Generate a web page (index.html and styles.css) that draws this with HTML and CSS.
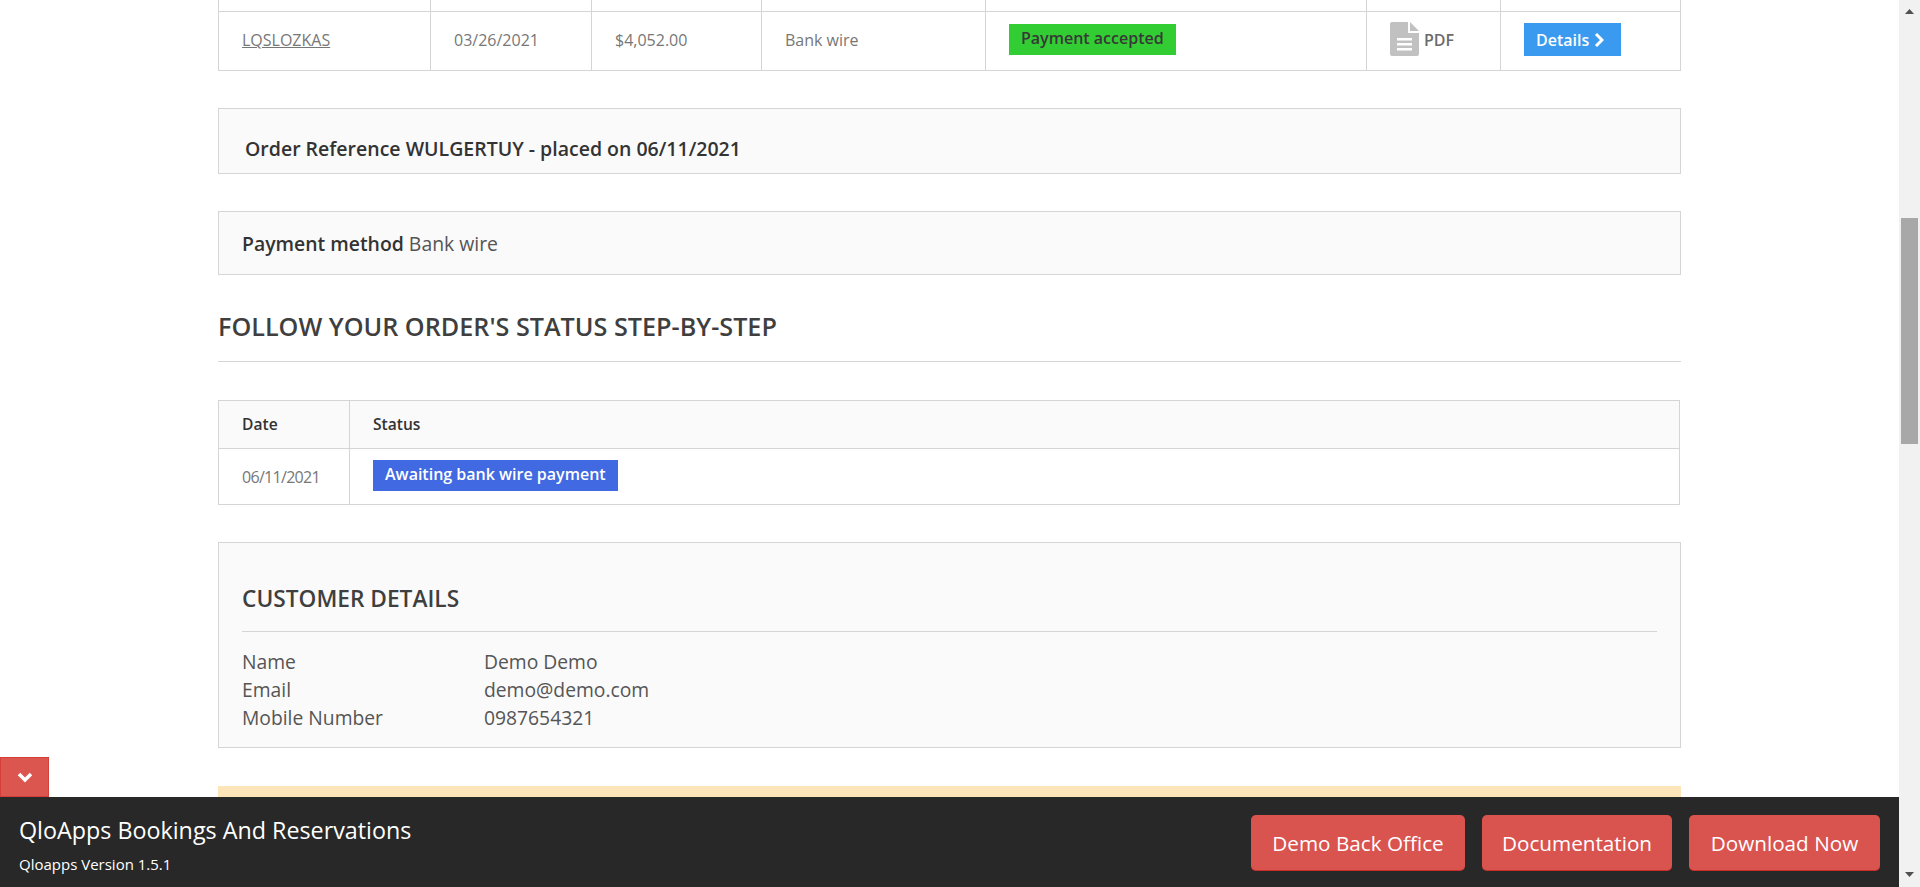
FILE: index.html
```html
<!DOCTYPE html>
<html>
<head lang="en">
    <meta charset="UTF-8">
    <title>Order history</title>
    <link rel="stylesheet" href="styles.css">
</head>
<body>
<div class="window">
    <div class="page">
        <div class="content">
            <table class="tbl tbl-orders">
                <colgroup>
                    <col class="c1"><col class="c2"><col class="c3"><col class="c4"><col class="c5"><col class="c6"><col class="c7">
                </colgroup>
                <tr class="row-cut"><td></td><td></td><td></td><td></td><td></td><td></td><td></td></tr>
                <tr class="row-order">
                    <td><a class="ref" href="#">LQSLOZKAS</a></td>
                    <td>03/26/2021</td>
                    <td>$4,052.00</td>
                    <td>Bank wire</td>
                    <td><span class="label label-green">Payment accepted</span></td>
                    <td>
                        <a class="pdf" href="#">
                            <svg width="29" height="34" viewBox="0 0 29 34">
                                <path d="M2 0H18V11H29V32a2 2 0 0 1-2 2H2a2 2 0 0 1-2-2V2a2 2 0 0 1 2-2z" fill="#c1c1c1"/>
                                <path d="M20 0L29 9H20z" fill="#c1c1c1"/>
                                <path d="M7 16h15v2.500H7zM7 21h15v2.500H7zM7 26h15v2.500H7z" fill="#fff"/>
                            </svg>
                            <span>PDF</span>
                        </a>
                    </td>
                    <td>
                        <a class="btn-details" href="#">Details
                            <svg width="10" height="14" viewBox="0 0 10 14"><path d="M2 1l6 6-6 6" fill="none" stroke="#fff" stroke-width="3"/></svg>
                        </a>
                    </td>
                </tr>
            </table>

            <div class="box box-ref">Order Reference WULGERTUY - placed on 06/11/2021</div>
            <div class="box box-pay"><b>Payment method</b> Bank wire</div>

            <h2 class="page-head">FOLLOW YOUR ORDER'S STATUS STEP-BY-STEP</h2>

            <table class="tbl tbl-status">
                <colgroup><col class="s1"><col></colgroup>
                <tr class="row-head"><th>Date</th><th>Status</th></tr>
                <tr class="row-status">
                    <td class="date">06/11/2021</td>
                    <td><span class="label label-blue">Awaiting bank wire payment</span></td>
                </tr>
            </table>

            <div class="box box-customer">
                <h3>CUSTOMER DETAILS</h3>
                <div class="info"><span>Name</span><span>Demo Demo</span></div>
                <div class="info"><span>Email</span><span>demo@demo.com</span></div>
                <div class="info"><span>Mobile Number</span><span>0987654321</span></div>
            </div>

            <div class="notice"></div>
        </div>

        <a class="toggle" href="#">
            <svg width="16" height="11" viewBox="0 0 16 11"><path d="M2 2l6 6 6-6" fill="none" stroke="#fff" stroke-width="3.500"/></svg>
        </a>
        <div class="bar">
            <div class="bar-text">
                <div class="bar-title">QloApps Bookings And Reservations</div>
                <div class="bar-version">Qloapps Version 1.5.1</div>
            </div>
            <div class="bar-btns">
                <a class="bar-btn b1" href="#">Demo Back Office</a>
                <a class="bar-btn b2" href="#">Documentation</a>
                <a class="bar-btn b3" href="#">Download Now</a>
            </div>
        </div>
    </div>
    <div class="scroll">
        <svg width="9" height="6" viewBox="0 0 9 6"><path d="M4.500 0L9 5H0z" fill="#505050"/></svg>
        <div class="thumb-track"><div class="thumb"></div></div>
        <svg width="9" height="6" viewBox="0 0 9 6"><path d="M0 0H9L4.500 5z" fill="#505050"/></svg>
    </div>
</div>
</body>
</html>
```

FILE: styles.css
```css
html,body{margin:0;padding:0;height:100%;overflow:hidden;}
body{font-family:"Open Sans","Liberation Sans",sans-serif;font-size:16px;color:#777;background:#fff;}
a{text-decoration:none;}
.window{display:flex;height:887px;overflow:hidden;}
.page{flex:1;position:relative;overflow:hidden;}
.content{width:1463px;margin-left:218px;}

.tbl{border-collapse:collapse;table-layout:fixed;width:1462px;}
.tbl td,.tbl th{border:1px solid #d6d4d4;padding:0 0 0 23px;text-align:left;}
.tbl-orders{margin-top:-1px;}
.c1{width:212px;}.c2{width:161px;}.c3{width:170px;}.c4{width:224px;}.c5{width:381px;}.c6{width:134px;}.c7{width:180px;}
.tbl .row-cut td{height:11px;padding:0;}
.tbl .row-order td{height:56px;padding-bottom:2px;}
.ref{color:#777;text-decoration:underline;}
.label{display:inline-block;height:31px;line-height:29px;padding:0 12px;font-weight:600;font-size:16px;vertical-align:middle;}
.label-green{background:#32cd32;color:#383838;margin-top:-1px;}
.label-blue{background:#4169e1;color:#fff;margin-top:-2px;}
.pdf{display:flex;align-items:center;color:#6b6b6b;font-weight:600;margin-top:-2px;}
.pdf span{margin-left:5px;margin-top:2px;}
.btn-details{display:inline-flex;align-items:center;gap:5px;height:33px;padding:0 17px 0 12px;background:#399af0;color:#fff;font-weight:600;margin-top:-1px;}

.box{border:1px solid #d6d4d4;background:#fafafa;box-sizing:border-box;}
.box-ref{height:66px;margin-top:37px;padding:26px 0 0 26px;font-size:19.500px;font-weight:600;color:#333;}
.box-pay{height:64px;margin-top:37px;padding:18px 0 0 23px;font-size:19.400px;color:#555;}
.box-pay b{font-weight:600;color:#333;}
.page-head{margin:36px 0 0;height:50px;border-bottom:1px solid #d6d4d4;font-size:25.200px;font-weight:600;color:#3f3f3f;line-height:31px;}

.tbl-status{margin-top:38px;}
.s1{width:131px;}
.tbl .row-head th{height:45px;padding-bottom:2px;background:#fafafa;font-size:15.600px;font-weight:600;color:#333;}
.row-status td{height:55px;}
.date{letter-spacing:-0.7px;}

.box-customer{height:206px;margin-top:37px;padding:34px 23px 0;font-size:19.300px;color:#555;}
.box-customer h3{margin:0 0 16px;height:54px;line-height:44px;border-bottom:1px solid #d6d4d4;font-size:22.700px;font-weight:600;color:#3f3f3f;}
.info{display:flex;height:28px;line-height:28px;}
.info span:first-child{width:242px;}
.notice{height:60px;margin-top:38px;background:#fde4b9;}

.toggle{position:absolute;left:0;bottom:90px;width:49px;height:40px;box-sizing:border-box;border:1px solid #d43f3a;background:#dc5650;display:flex;align-items:center;justify-content:center;}
.bar{position:absolute;left:0;right:0;bottom:0;height:90px;background:#282828;display:flex;justify-content:space-between;color:#fff;}
.bar-text{padding:0 0 0 19px;}
.bar-title{margin-top:16px;font-size:23.300px;line-height:34px;}
.bar-version{margin-top:7px;font-size:15px;line-height:20px;}
.bar-btns{display:flex;gap:17px;margin:18px 19px 0 0;}
.bar-btn{height:56px;line-height:56px;box-sizing:border-box;text-align:center;background:#d9534f;border:1px solid #c9302c;border-width:0 0 1px;border-radius:5px;color:#fff;font-size:20.700px;}
.b1{width:214px;}.b2{width:190px;}.b3{width:191px;}

.scroll{width:21px;background:#f1f1f1;display:flex;flex-direction:column;align-items:center;padding-top:9px;box-sizing:border-box;height:887px;}
.thumb-track{flex:1;width:17px;padding-top:203px;box-sizing:border-box;}
.thumb{height:226px;background:#a8a8a8;}
.scroll svg:last-child{margin-bottom:9px;}
```
